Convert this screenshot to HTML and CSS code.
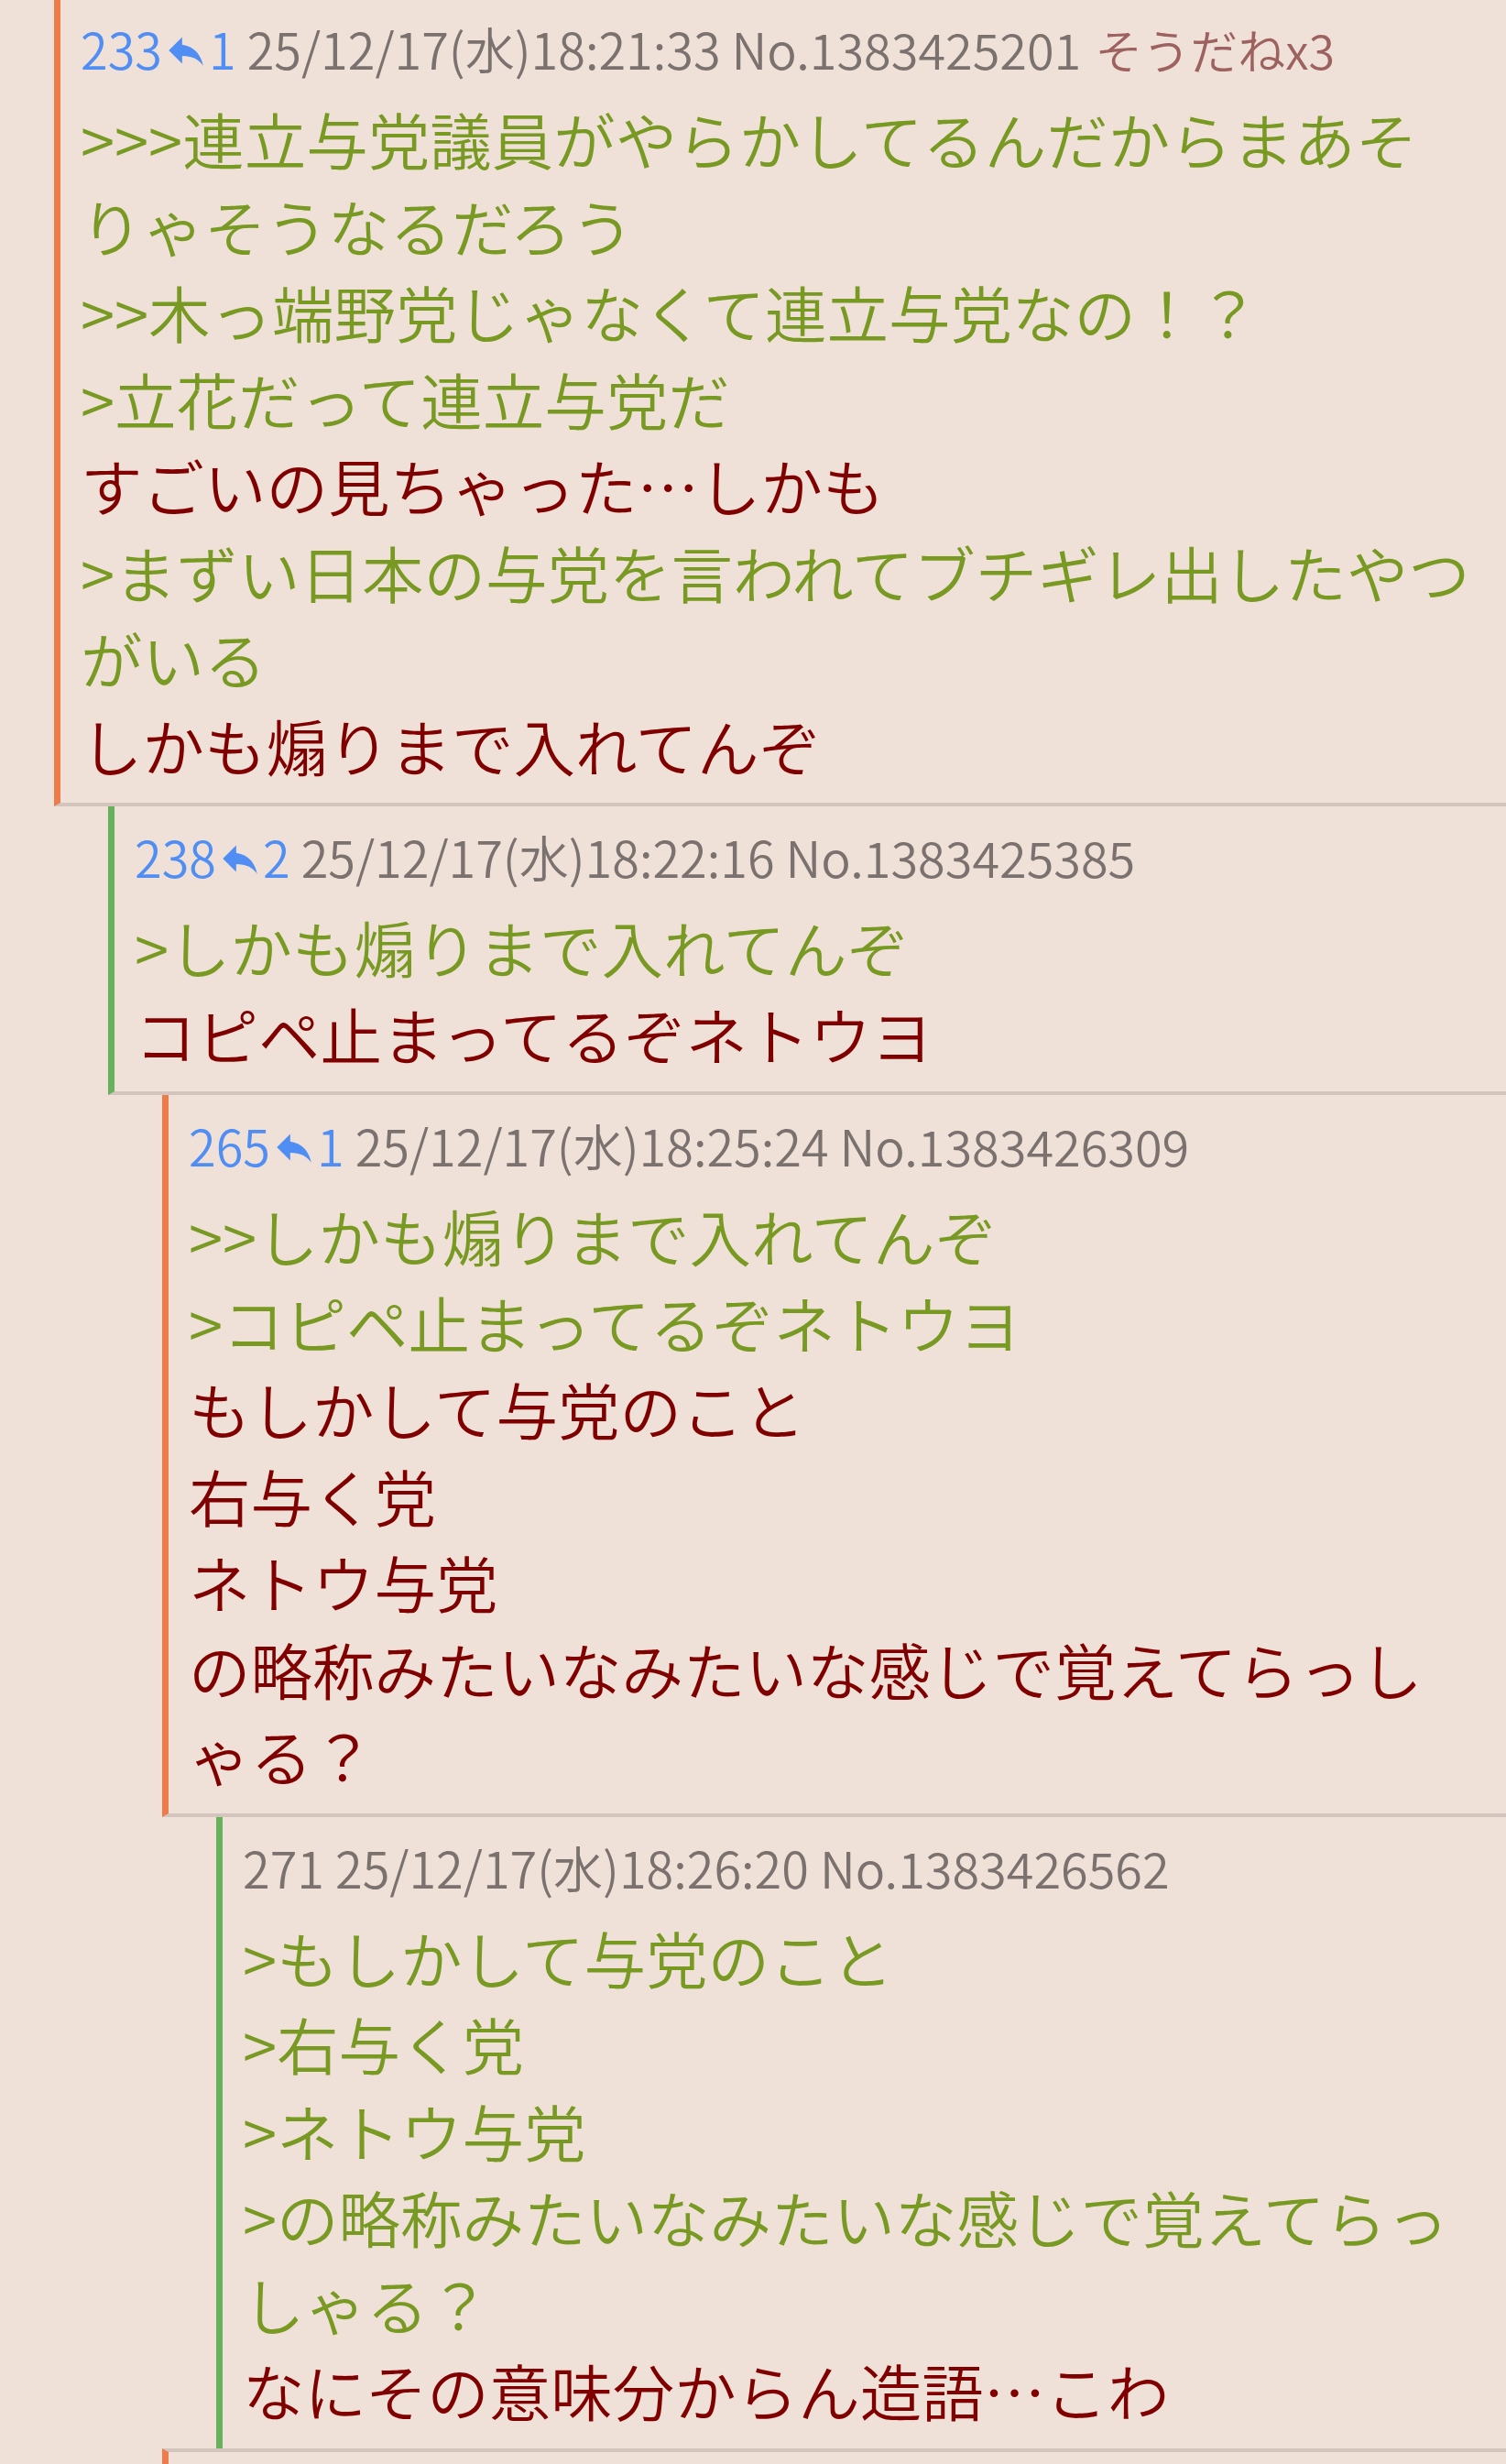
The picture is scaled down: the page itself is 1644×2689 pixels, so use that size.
FILE: index.html
```html
<!DOCTYPE html>
<html>
	<head>
		<meta charset="utf-8">
		<title>スレッド</title>
		<link rel="stylesheet" href="styles.css">
	</head>
	<body>
		<div class="thread">
			<div class="res d1 bar-o">
				<div class="head">
					<span class="num">233</span><span class="rep"><svg viewBox="0 0 24 24"><path d="M10 9V5l-7 7 7 7v-4.1c5 0 8.5 1.6 11 5.1-1-5-4-10-11-11z"/></svg>1</span>
					<span class="date">25/12/17(水)18:21:33</span>
					<span class="no">No.1383425201</span><span class="sod">そうだねx3</span>
				</div>
				<div class="body">
					<span class="q">&gt;&gt;&gt;連立与党議員がやらかしてるんだからまあそりゃそうなるだろう</span><br>
					<span class="q">&gt;&gt;木っ端野党じゃなくて連立与党なの！？</span><br>
					<span class="q">&gt;立花だって連立与党だ</span><br>
					すごいの見ちゃった…しかも<br>
					<span class="q">&gt;まずい日本の与党を言われてブチギレ出したやつがいる</span><br>
					しかも煽りまで入れてんぞ
				</div>
			</div>

			<div class="res d2 bar-g">
				<div class="head">
					<span class="num">238</span><span class="rep"><svg viewBox="0 0 24 24"><path d="M10 9V5l-7 7 7 7v-4.1c5 0 8.5 1.6 11 5.1-1-5-4-10-11-11z"/></svg>2</span>
					<span class="date">25/12/17(水)18:22:16</span>
					<span class="no">No.1383425385</span>
				</div>
				<div class="body">
					<span class="q">&gt;しかも煽りまで入れてんぞ</span><br>
					コピペ止まってるぞネトウヨ
				</div>
			</div>

			<div class="res d3 bar-o">
				<div class="head">
					<span class="num">265</span><span class="rep"><svg viewBox="0 0 24 24"><path d="M10 9V5l-7 7 7 7v-4.1c5 0 8.5 1.6 11 5.1-1-5-4-10-11-11z"/></svg>1</span>
					<span class="date">25/12/17(水)18:25:24</span>
					<span class="no">No.1383426309</span>
				</div>
				<div class="body">
					<span class="q">&gt;&gt;しかも煽りまで入れてんぞ</span><br>
					<span class="q">&gt;コピペ止まってるぞネトウヨ</span><br>
					もしかして与党のこと<br>
					右与く党<br>
					ネトウ与党<br>
					の略称みたいなみたいな感じで覚えてらっしゃる？
				</div>
			</div>

			<div class="res d4 bar-g last">
				<div class="head">
					<span class="plain">271</span>
					<span class="date">25/12/17(水)18:26:20</span>
					<span class="no">No.1383426562</span>
				</div>
				<div class="body">
					<span class="q">&gt;もしかして与党のこと</span><br>
					<span class="q">&gt;右与く党</span><br>
					<span class="q">&gt;ネトウ与党</span><br>
					<span class="q">&gt;の略称みたいなみたいな感じで覚えてらっしゃる？</span><br>
					なにその意味分からん造語…こわ
				</div>
			</div>

			<div class="res d3 bar-o next"></div>
		</div>
	</body>
</html>
```

FILE: styles.css
```css
html, body {
	margin: 0;
	padding: 0;
	overflow: hidden;
}
body {
	background: #efe1d8;
	font-family: "Noto Sans CJK JP", "Noto Sans", sans-serif;
	font-weight: 350;
	color: #800000;
}
.thread {
	margin-top: -2px;
}

.res {
	padding: 22px 31px 16px 22px;
	border-left: 7px solid #ee7c4b;
	border-bottom: 4px solid #d3c5bd;
}
.d1 { margin-left: 59px; }
.d2 { margin-left: 118px; }
.d3 { margin-left: 177px; }
.d4 { margin-left: 236px; }
.bar-o { border-left-color: #ee7c4b; }
.bar-g { border-left-color: #68b15b; }
.res.last { border-bottom: none; }
.res.next {
	border-top: 4px solid #d3c5bd;
	border-bottom: none;
	height: 200px;
}

.head {
	font-size: 54px;
	line-height: 66px;
	height: 66px;
	margin-bottom: 18px;
	color: #7b716e;
	white-space: nowrap;
}
.num, .rep { color: #518ef3; }
.rep svg {
	width: 50px;
	height: 50px;
	fill: #518ef3;
	vertical-align: -4px;
	margin: 0 0 0 1px;
}
.sod {
	margin-left: 15px;
	font-size: 52px;
	color: #9d625f;
}

.body {
	font-size: 67.5px;
	line-height: 94.5px;
	line-break: loose;
}
.q { color: #789922; }
```
